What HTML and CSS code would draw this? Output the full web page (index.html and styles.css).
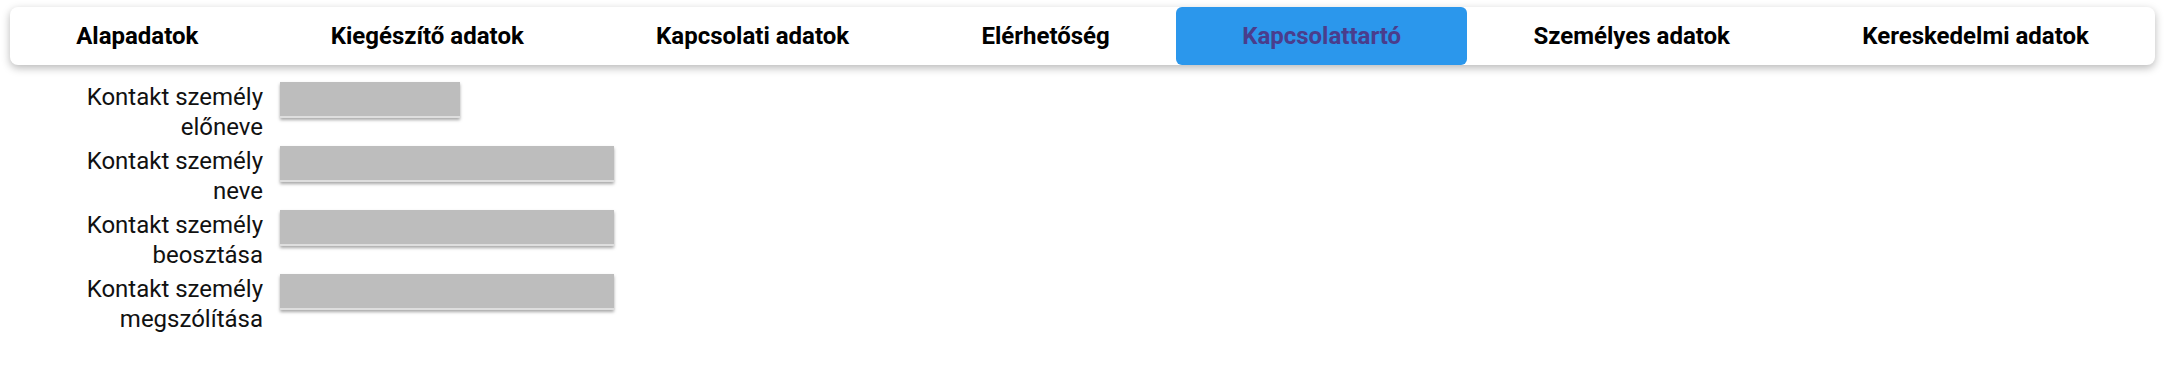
FILE: index.html
```
<!DOCTYPE html>
<html lang="hu">
<head>
    <meta charset="UTF-8">
    <meta name="viewport" content="width=device-width, initial-scale=1.0">
    <title>Kapcsolattartó</title>
    <link rel="stylesheet" href="styles.css">
</head>
<body>
    <nav class="tab-bar">
        <div class="tab">Alapadatok</div>
        <div class="tab">Kiegészítő adatok</div>
        <div class="tab">Kapcsolati adatok</div>
        <div class="tab">Elérhetőség</div>
        <div class="tab active">Kapcsolattartó</div>
        <div class="tab">Személyes adatok</div>
        <div class="tab">Kereskedelmi adatok</div>
    </nav>

    <form class="contact-form">
        <label class="field-label" for="f1">Kontakt személy előneve</label>
        <div class="field"><input class="input short" id="f1" type="text"></div>

        <label class="field-label" for="f2">Kontakt személy neve</label>
        <div class="field"><input class="input" id="f2" type="text"></div>

        <label class="field-label" for="f3">Kontakt személy beosztása</label>
        <div class="field"><input class="input" id="f3" type="text"></div>

        <label class="field-label" for="f4">Kontakt személy megszólítása</label>
        <div class="field"><input class="input" id="f4" type="text"></div>
    </form>
</body>
</html>
```

FILE: styles.css
```
* {
    margin: 0;
    padding: 0;
    box-sizing: border-box;
    font-family: 'Roboto', sans-serif;
}

body {
    background: #fff;
    padding: 7px 9px 0 10px;
}

.tab-bar {
    display: flex;
    height: 58px;
    background: #fff;
    border-radius: 8px;
    box-shadow: 0 3px 8px rgba(0,0,0,0.28);
}

.tab {
    flex: 1 1 auto;
    display: flex;
    align-items: center;
    justify-content: center;
    font-size: 24px;
    font-weight: 700;
    color: #000;
    white-space: nowrap;
    border-radius: 6px;
}

.tab.active {
    background: #2b97ec;
    color: #4a3d8c;
}

.contact-form {
    display: grid;
    grid-template-columns: 200px 334px;
    column-gap: 17px;
    row-gap: 4px;
    margin: 17px 0 0 53px;
}

.field-label {
    font-size: 24px;
    line-height: 30px;
    color: #111;
    text-align: right;
}

.input {
    display: block;
    width: 100%;
    height: 36px;
    background: #bdbdbd;
    border: none;
    border-bottom: 2px solid #dedede;
    box-shadow: 0 2px 3px rgba(0,0,0,0.35);
    outline: none;
}

.input.short {
    width: 180px;
}
```
